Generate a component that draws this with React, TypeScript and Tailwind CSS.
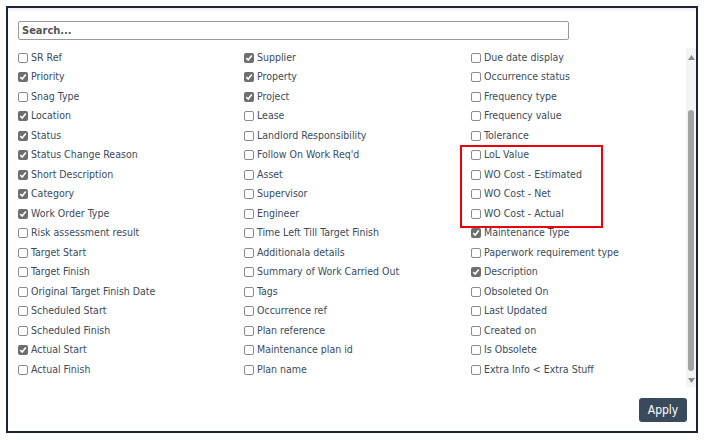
import React from 'react';

type Field = { label: string; checked: boolean };

const col1: Field[] = [
  { label: 'SR Ref', checked: false },
  { label: 'Priority', checked: true },
  { label: 'Snag Type', checked: false },
  { label: 'Location', checked: true },
  { label: 'Status', checked: true },
  { label: 'Status Change Reason', checked: true },
  { label: 'Short Description', checked: true },
  { label: 'Category', checked: true },
  { label: 'Work Order Type', checked: true },
  { label: 'Risk assessment result', checked: false },
  { label: 'Target Start', checked: false },
  { label: 'Target Finish', checked: false },
  { label: 'Original Target Finish Date', checked: false },
  { label: 'Scheduled Start', checked: false },
  { label: 'Scheduled Finish', checked: false },
  { label: 'Actual Start', checked: true },
  { label: 'Actual Finish', checked: false },
];

const col2: Field[] = [
  { label: 'Supplier', checked: true },
  { label: 'Property', checked: true },
  { label: 'Project', checked: true },
  { label: 'Lease', checked: false },
  { label: 'Landlord Responsibility', checked: false },
  { label: "Follow On Work Req'd", checked: false },
  { label: 'Asset', checked: false },
  { label: 'Supervisor', checked: false },
  { label: 'Engineer', checked: false },
  { label: 'Time Left Till Target Finish', checked: false },
  { label: 'Additionala details', checked: false },
  { label: 'Summary of Work Carried Out', checked: false },
  { label: 'Tags', checked: false },
  { label: 'Occurrence ref', checked: false },
  { label: 'Plan reference', checked: false },
  { label: 'Maintenance plan id', checked: false },
  { label: 'Plan name', checked: false },
];

const col3: Field[] = [
  { label: 'Due date display', checked: false },
  { label: 'Occurrence status', checked: false },
  { label: 'Frequency type', checked: false },
  { label: 'Frequency value', checked: false },
  { label: 'Tolerance', checked: false },
  { label: 'LoL Value', checked: false },
  { label: 'WO Cost - Estimated', checked: false },
  { label: 'WO Cost - Net', checked: false },
  { label: 'WO Cost - Actual', checked: false },
  { label: 'Maintenance Type', checked: true },
  { label: 'Paperwork requirement type', checked: false },
  { label: 'Description', checked: true },
  { label: 'Obsoleted On', checked: false },
  { label: 'Last Updated', checked: false },
  { label: 'Created on', checked: false },
  { label: 'Is Obsolete', checked: false },
  { label: 'Extra Info < Extra Stuff', checked: false },
];

const Box: React.FC<{ checked: boolean }> = ({ checked }) =>
  checked ? (
    <span className="flex h-[10px] w-[10px] shrink-0 items-center justify-center rounded-[2px] bg-[#6e6e6e]">
      <svg width="8" height="8" viewBox="0 0 8 8">
        <path d="M1.3 4.2 L3.2 6 L6.8 1.6" fill="none" stroke="#fff" strokeWidth="1.6" />
      </svg>
    </span>
  ) : (
    <span className="h-[10px] w-[10px] shrink-0 rounded-[2px] border border-[#8c8c8c] bg-white" />
  );

const Column: React.FC<{ items: Field[]; children?: React.ReactNode }> = ({ items, children }) => (
  <div className="relative flex flex-col">
    {items.map((f) => (
      <label key={f.label} className="flex h-[19.5px] items-center gap-[3px] whitespace-nowrap">
        <Box checked={f.checked} />
        <span>{f.label}</span>
      </label>
    ))}
    {children}
  </div>
);

export default function App() {
  return (
    <div
      className="h-[440px] w-[709px] bg-white pl-[6px] pt-[6px] text-[10.5px] text-[#3d4b5b]"
      style={{ fontFamily: '"DejaVu Sans Condensed", "DejaVu Sans", sans-serif' }}
    >
      <div className="flex h-[427px] w-[692px] flex-col border-2 border-[#1c2535] bg-white shadow-[inset_0_3px_3px_-1px_rgba(0,0,0,0.07)]">
        <div className="pl-[10px] pt-[13px]">
          <input
            className="h-[19px] w-[551px] rounded-[2px] border border-[#9a9a9a] px-[3px] text-[11px] outline-none placeholder:font-bold placeholder:text-[#555]"
            placeholder="Search..."
          />
        </div>

        <div className="mt-[8px] flex h-[339px]">
          <div className="grid flex-1 grid-cols-[226px_227px_1fr] pl-[10px]">
            <Column items={col1} />
            <Column items={col2} />
            <Column items={col3}>
              <div className="pointer-events-none absolute left-[-11px] top-[96.5px] h-[83px] w-[143px] border-2 border-[#e8000b]" />
            </Column>
          </div>

          <div className="flex w-[10px] flex-col items-center bg-[#f4f4f4]">
            <svg width="7" height="5" viewBox="0 0 7 5" className="mt-[7px]">
              <path d="M0 5 L3.5 0 L7 5 Z" fill="#8a8a8a" />
            </svg>
            <div className="mt-[50px] h-[261px] w-[6px] rounded-[3px] bg-[#a3a3a3]" />
            <svg width="7" height="5" viewBox="0 0 7 5" className="mt-[7px]">
              <path d="M0 0 L7 0 L3.5 5 Z" fill="#8a8a8a" />
            </svg>
          </div>
        </div>

        <div className="flex justify-end pr-[9px] pt-[11px]">
          <button className="h-[24px] w-[48px] rounded-[3px] bg-[#3a4a5d] text-[12px] text-white">
            Apply
          </button>
        </div>
      </div>
    </div>
  );
}
